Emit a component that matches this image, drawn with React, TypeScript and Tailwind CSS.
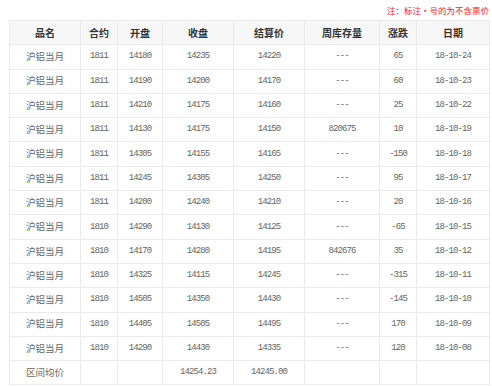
import React from "react";

const rows: [string, string, string, string, string, string, string, string][] = [
  ["沪铝当月", "1811", "14180", "14235", "14220", "---", "65", "18-10-24"],
  ["沪铝当月", "1811", "14190", "14200", "14170", "---", "60", "18-10-23"],
  ["沪铝当月", "1811", "14210", "14175", "14160", "---", "25", "18-10-22"],
  ["沪铝当月", "1811", "14130", "14175", "14150", "820675", "10", "18-10-19"],
  ["沪铝当月", "1811", "14305", "14155", "14165", "---", "-150", "18-10-18"],
  ["沪铝当月", "1811", "14245", "14305", "14250", "---", "95", "18-10-17"],
  ["沪铝当月", "1811", "14200", "14240", "14210", "---", "20", "18-10-16"],
  ["沪铝当月", "1810", "14290", "14130", "14125", "---", "-65", "18-10-15"],
  ["沪铝当月", "1810", "14170", "14280", "14195", "842676", "35", "18-10-12"],
  ["沪铝当月", "1810", "14325", "14115", "14245", "---", "-315", "18-10-11"],
  ["沪铝当月", "1810", "14505", "14350", "14430", "---", "-145", "18-10-10"],
  ["沪铝当月", "1810", "14405", "14505", "14495", "---", "170", "18-10-09"],
  ["沪铝当月", "1810", "14290", "14430", "14335", "---", "120", "18-10-08"],
];

const widths = ["w-[71px]", "w-[37px]", "w-[45px]", "w-[71px]", "w-[71px]", "w-[75px]", "w-[37px]", "w-[73px]"];
const headers = ["品名", "合约", "开盘", "收盘", "结算价", "周库存量", "涨跌", "日期"];

const cn = "font-['Noto_Sans_CJK_SC',sans-serif]";
const mono = "font-['Liberation_Mono',monospace] tracking-[-0.9px]";

export default function App() {
  return (
    <div className="w-[492px] h-[386px] bg-white overflow-hidden pl-[9px]">
      <div className="w-[480px] h-[20px] flex items-center justify-end">
        <span className={`${cn} text-[8.5px] leading-none text-[#ff2020]`}>注：标注•号的为不含票价</span>
      </div>
      <table className="w-[480px] border-collapse table-fixed">
        <colgroup>
          {widths.map((w, i) => (
            <col key={i} className={w} />
          ))}
        </colgroup>
        <thead>
          <tr className="h-[24.3px] bg-[#f7f7f7]">
            {headers.map((h, i) => (
              <th
                key={i}
                className={`${cn} border border-[#ebebeb] text-[10px] font-bold text-[#333] text-center p-0 leading-none`}
              >
                {h}
              </th>
            ))}
          </tr>
        </thead>
        <tbody>
          {rows.map((r, ri) => (
            <tr key={ri} className="h-[24.3px]">
              {r.map((c, ci) => (
                <td
                  key={ci}
                  className={`${ci === 0 ? `${cn} text-[9.5px]` : `${mono} text-[9px]`} border border-[#ebebeb] text-[#666] text-center p-0 leading-none`}
                >
                  {c}
                </td>
              ))}
            </tr>
          ))}
          <tr className="h-[24.3px]">
            <td className={`${cn} text-[9.5px] border border-[#ebebeb] text-[#666] text-center p-0 leading-none`}>区间均价</td>
            <td className="border border-[#ebebeb] p-0"></td>
            <td className="border border-[#ebebeb] p-0"></td>
            <td className={`${mono} text-[9px] border border-[#ebebeb] text-[#666] text-center p-0 leading-none`}>14254.23</td>
            <td className={`${mono} text-[9px] border border-[#ebebeb] text-[#666] text-center p-0 leading-none`}>14245.00</td>
            <td className="border border-[#ebebeb] p-0"></td>
            <td className="border border-[#ebebeb] p-0"></td>
            <td className="border border-[#ebebeb] p-0"></td>
          </tr>
        </tbody>
      </table>
    </div>
  );
}
